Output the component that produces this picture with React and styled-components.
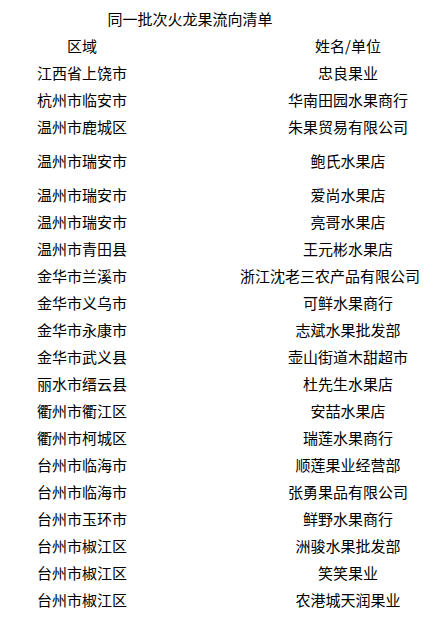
import styled, { createGlobalStyle } from 'styled-components';

const GlobalStyle = createGlobalStyle`
	html, body {
		margin: 0;
		padding: 0;
		background: #ffffff;
		overflow: hidden;
	}
`;

const rows = [
	{ area: '江西省上饶市', name: '忠良果业' },
	{ area: '杭州市临安市', name: '华南田园水果商行' },
	{ area: '温州市鹿城区', name: '朱果贸易有限公司' },
	{ area: '温州市瑞安市', name: '鲍氏水果店', tall: true },
	{ area: '温州市瑞安市', name: '爱尚水果店' },
	{ area: '温州市瑞安市', name: '亮哥水果店' },
	{ area: '温州市青田县', name: '王元彬水果店' },
	{ area: '金华市兰溪市', name: '浙江沈老三农产品有限公司', wide: true },
	{ area: '金华市义乌市', name: '可鲜水果商行' },
	{ area: '金华市永康市', name: '志斌水果批发部' },
	{ area: '金华市武义县', name: '壶山街道木甜超市' },
	{ area: '丽水市缙云县', name: '杜先生水果店' },
	{ area: '衢州市衢江区', name: '安喆水果店' },
	{ area: '衢州市柯城区', name: '瑞莲水果商行' },
	{ area: '台州市临海市', name: '顺莲果业经营部' },
	{ area: '台州市临海市', name: '张勇果品有限公司' },
	{ area: '台州市玉环市', name: '鲜野水果商行' },
	{ area: '台州市椒江区', name: '洲骏水果批发部' },
	{ area: '台州市椒江区', name: '笑笑果业' },
	{ area: '台州市椒江区', name: '农港城天润果业' },
];

const Sheet = styled.div`
	width: 456px;
	padding-top: 5px;
	font-family: 'Noto Sans CJK SC', 'Noto Sans', sans-serif;
	font-size: 15px;
	color: #000000;
`;

const Title = styled.div`
	width: 380px;
	height: 27px;
	line-height: 27px;
	text-align: center;
	white-space: nowrap;
`;

const Row = styled.div`
	display: grid;
	grid-template-columns: 164px 216px;
	column-gap: 76px;
	align-items: center;
	height: ${({ $tall }) => ($tall ? '41px' : '27px')};
`;

const Cell = styled.div`
	line-height: 27px;
	white-space: nowrap;
	text-align: ${({ $align }) => $align || 'center'};
`;

export default function App() {
	return (
		<>
			<GlobalStyle />
			<Sheet>
				<Title>同一批次火龙果流向清单</Title>
				<Row>
					<Cell>区域</Cell>
					<Cell>姓名/单位</Cell>
				</Row>
				{rows.map((row, i) => (
					<Row key={i} $tall={row.tall}>
						<Cell>{row.area}</Cell>
						<Cell $align={row.wide ? 'left' : 'center'}>{row.name}</Cell>
					</Row>
				))}
			</Sheet>
		</>
	);
}
